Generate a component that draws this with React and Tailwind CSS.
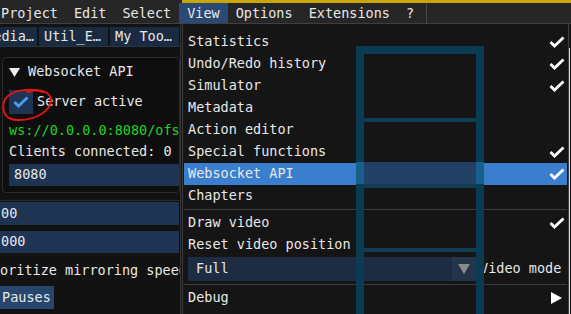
import React from 'react'

const menuItems = ['Project', 'Edit', 'Select', 'View', 'Options', 'Extensions', '?']

const Check = ({ className = '' }) => (
  <svg width="16" height="12" viewBox="0 0 16 12" className={className}>
    <polyline points="1.5,6 5.5,10 14.5,1.5" fill="none" stroke="currentColor" strokeWidth="2.8" />
  </svg>
)

const MenuRow = ({ label, checked, active }) => (
  <div className={`h-[22px] flex items-center justify-between pl-[4px] pr-[2px] ${active ? 'bg-[#3a7ecd]' : ''}`}>
    <span>{label}</span>
    {checked && <Check className="text-white" />}
  </div>
)

const Separator = () => <div className="h-px bg-[#3b3b44] my-[2px]" />

const ViewMenu = () => (
  <div className="absolute left-[182px] top-[24px] w-[387px] h-[290px] bg-[#151515] border-l border-r border-[#3d3d3d] px-[1px] pt-[7px] z-10">
    <MenuRow label="Statistics" checked />
    <MenuRow label="Undo/Redo history" checked />
    <MenuRow label="Simulator" checked />
    <MenuRow label="Metadata" />
    <MenuRow label="Action editor" />
    <MenuRow label="Special functions" checked />
    <MenuRow label="Websocket API" checked active />
    <MenuRow label="Chapters" />
    <Separator />
    <MenuRow label="Draw video" checked />
    <MenuRow label="Reset video position" />
    <div className="flex items-center mt-px pl-[4px]">
      <div className="w-[288px] h-[24px] flex bg-[#1e2c43]">
        <span className="flex-1 flex items-center pl-[8px]">Full</span>
        <span className="w-[24px] flex items-center justify-center bg-[#24344d]">
          <svg width="12" height="10" viewBox="0 0 12 10"><polygon points="0,0 12,0 6,10" fill="#8a8a8a" /></svg>
        </span>
      </div>
      <span className="ml-[4px]">Video mode</span>
    </div>
    <div className="mt-[3px]"><Separator /></div>
    <div className="h-[22px] flex items-center justify-between pl-[4px] pr-[5px]">
      <span>Debug</span>
      <svg width="11" height="12" viewBox="0 0 11 12"><polygon points="0,0 11,6 0,12" fill="#ffffff" /></svg>
    </div>
  </div>
)

// drawing that sits on top of the open menu
const Ladder = () => (
  <div className="absolute left-[356px] top-[46px] w-[128px] h-[268px] z-20 pointer-events-none">
    <div className="absolute left-0 top-0 w-full h-[8px] bg-[#0b3b52]" />
    <div className="absolute left-[8px] top-[116px] w-[112px] h-[22px] bg-[#223f66]" />
    <div className="absolute left-0 top-0 w-[8px] h-full bg-[#0b3b52]" />
    <div className="absolute right-0 top-0 w-[8px] h-full bg-[#0b3b52]" />
    <div className="absolute left-0 top-[116px] w-[8px] h-[22px] bg-[#1a5f8c]" />
    <div className="absolute right-0 top-[116px] w-[8px] h-[22px] bg-[#1a5f8c]" />
    <div className="absolute left-[8px] top-[72px] w-[112px] h-[4px] bg-[#0e3d55]" />
    <div className="absolute left-[8px] top-[138px] w-[112px] h-[4px] bg-[#0e3d55]" />
    <div className="absolute left-[8px] top-[202px] w-[112px] h-[4px] bg-[#0e3d55]" />
  </div>
)

const Tab = ({ children, width, end }) => (
  <div className={`h-[19px] ${width} overflow-hidden flex items-center pt-px bg-[#1a2a40] whitespace-nowrap ${end ? 'justify-end pr-[3px]' : 'pl-[5px]'}`}>
    {children}
  </div>
)

const LeftPanel = () => (
  <aside className="w-[181px] h-full flex flex-col border-r border-[#333] overflow-hidden bg-[#121212]">
    <div className="flex gap-[2px] pt-[3px] h-[22px]">
      <Tab width="w-[37px]" end>edia…</Tab>
      <Tab width="w-[69px]">Util_E…</Tab>
      <Tab width="w-[69px]">My Too…</Tab>
    </div>
    <div className="h-px bg-[#26344a]" />
    <div className="relative ml-[2px] mt-[10px] h-[136px] rounded-[4px] border border-[#2c2c2c] bg-[#0e0e0e] pl-[6px] whitespace-nowrap">
      <div className="h-[28px] flex items-center gap-[8px]">
        <svg width="11" height="9" viewBox="0 0 11 9"><polygon points="0,0 11,0 5.5,9" fill="#ececec" /></svg>
        <span>Websocket API</span>
      </div>
      <div className="h-[30px] mt-px flex items-center gap-[4px]">
        <div className="w-[24px] h-[24px] bg-[#1f3453] flex items-center justify-center">
          <Check className="text-[#4a9cf7]" />
        </div>
        <span>Server active</span>
      </div>
      <div className="h-[22px] mt-[3px] flex items-center text-[#1fd51f]">ws://0.0.0.0:8080/ofs</div>
      <div className="h-[20px] flex items-center">Clients connected: 0</div>
      <div className="h-[22px] mt-[2px] flex items-center bg-[#1f3352] pl-[5px]">8080</div>
      <svg className="absolute left-[-4px] top-[30px]" width="58" height="36" viewBox="0 0 58 36">
        <path d="M44 4 C34 0 18 1 9 8 C2 14 3 26 10 30 C18 34 34 32 44 25 C52 19 55 10 48 5 C42 1 34 2 28 4" fill="none" stroke="#e01515" strokeWidth="2" strokeLinecap="round" />
      </svg>
    </div>
    <div className="h-[7px]" />
    <div className="h-px bg-[#2b2b2b]" />
    <div className="flex-1 flex flex-col bg-[#121212] pt-px whitespace-nowrap">
      <div className="h-[23px] w-[179px] bg-[#1f3352] flex items-center pl-px">00</div>
      <div className="h-[22px] w-[179px] mt-[6px] bg-[#1f3352] flex items-center pl-px">000</div>
      <div className="h-[20px] mt-[8px] flex items-center">oritize mirroring speed</div>
      <div className="h-[23px] w-[54px] mt-[5px] bg-[#27466e] flex items-center pl-[2px]">Pauses</div>
    </div>
  </aside>
)

export default function App() {
  return (
    <div className="relative w-[571px] h-[314px] overflow-hidden bg-[#151515] text-[#e8e8e8] text-[13.5px] leading-none font-['DejaVu_Sans_Mono',monospace]">
      <header className="h-[24px] flex flex-col bg-[#262626] border-b border-[#3f3f3f]">
        <div className="flex h-[3px]">
          <div className="w-[182px]" />
          <div className="flex-1 bg-[#c8a800]" />
        </div>
        <nav className="flex h-[20px] ml-[-7px]">
          {menuItems.map((item) => (
            <div key={item} className={`flex items-center pt-[2px] px-[8px] ${item === 'View' ? 'bg-[#2a4a75]' : ''}`}>{item}</div>
          ))}
          <div className="w-px bg-[#4a4a4a] ml-[4px]" />
        </nav>
      </header>
      <div className="flex h-[290px]">
        <LeftPanel />
        <div className="flex-1" />
        <div className="w-px mt-[24px] bg-[#d8d8d8]" />
        <div className="w-px" />
      </div>
      <ViewMenu />
      <Ladder />
    </div>
  )
}
